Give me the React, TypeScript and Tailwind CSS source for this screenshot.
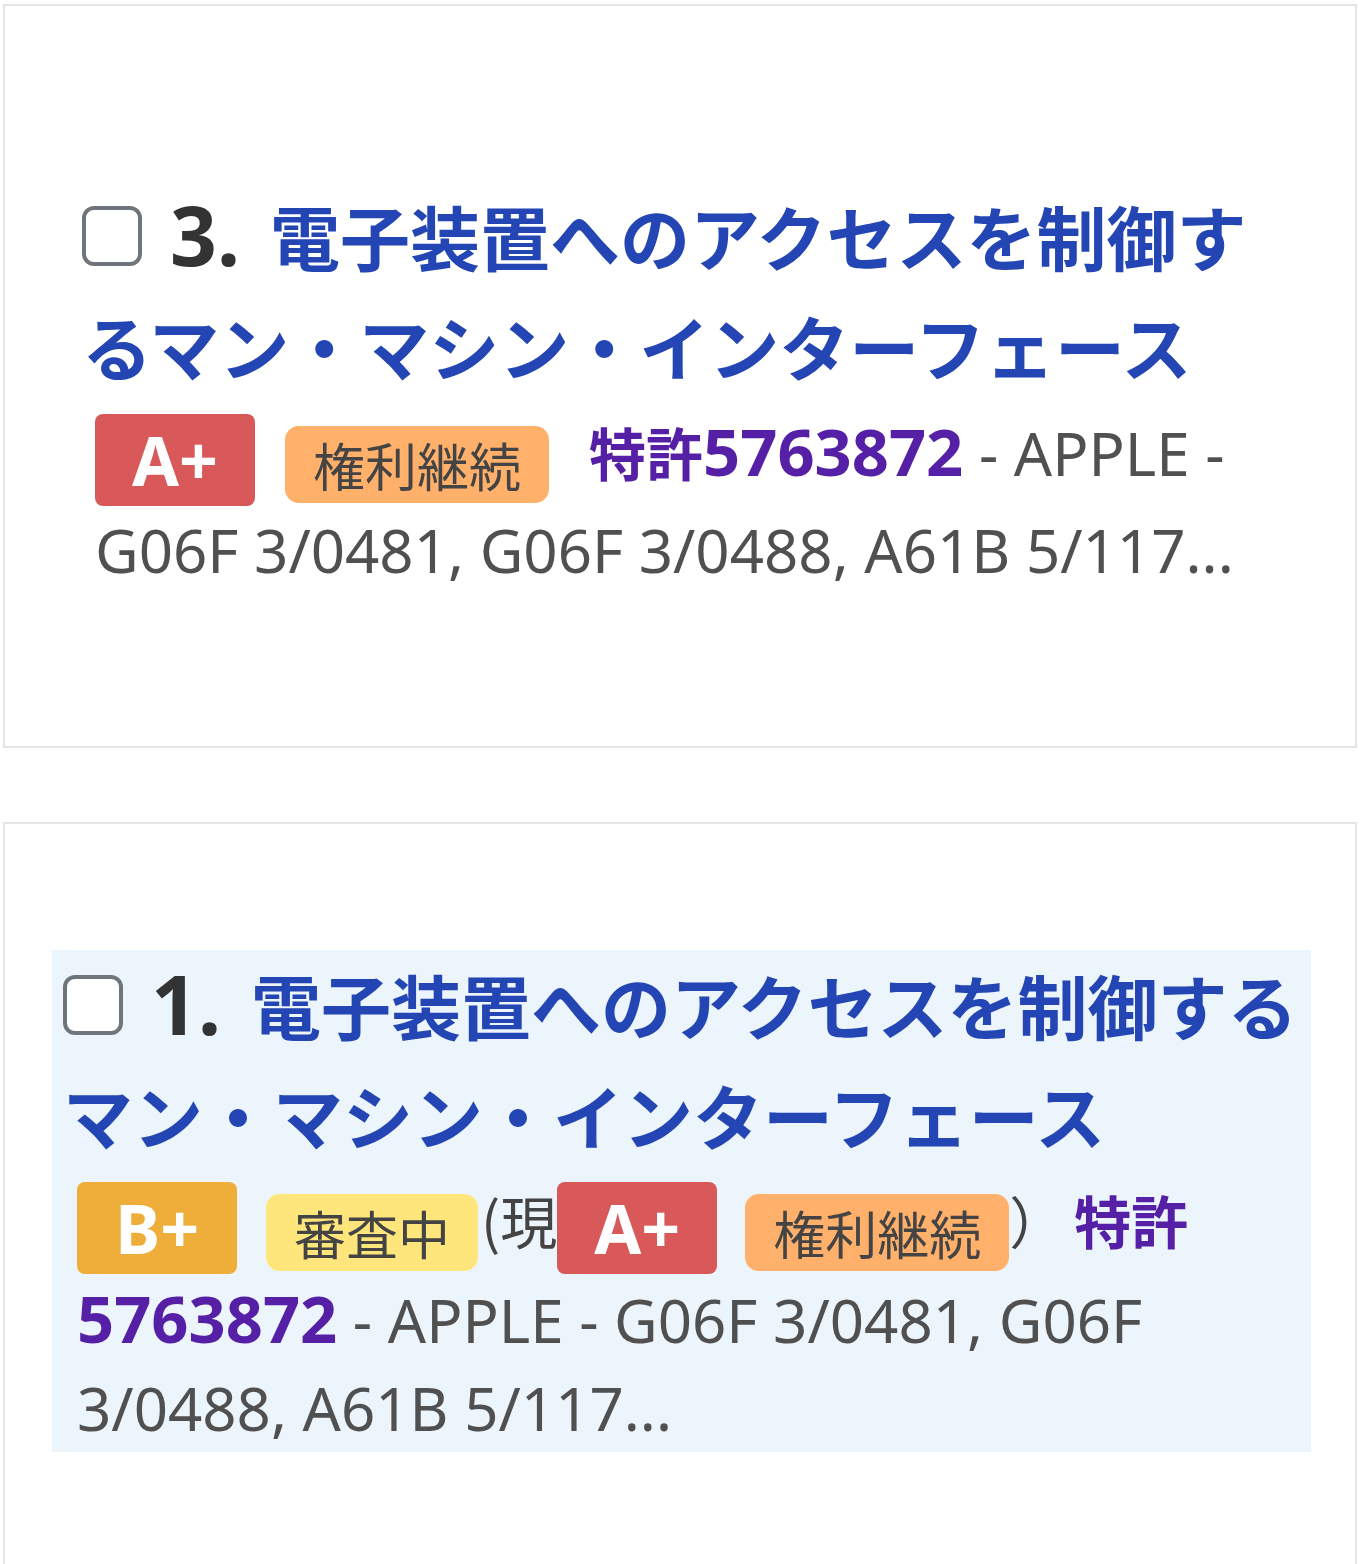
import React from "react";

const TITLE = "電子装置へのアクセスを制御するマン・マシン・インターフェース";

function Checkbox() {
  return (
    <span className="inline-block w-[60px] h-[60px] border-[4px] border-[#6e757c] rounded-[12px] bg-white align-baseline mr-[28px]" />
  );
}

function Title({ num }: { num: string }) {
  return (
    <div className="leading-[110px] text-[70px] font-bold text-[#2446b4] font-['Noto_Sans_CJK_JP',sans-serif]">
      <Checkbox />
      <span className="text-[82px] leading-[90px] text-[#333333] mr-[30px] font-['Noto_Sans',sans-serif]">
        {num}.
      </span>
      {TITLE}
    </div>
  );
}

function Grade({ label, className }: { label: string; className: string }) {
  return (
    <span
      className={`inline-flex items-center justify-center w-[160px] h-[92px] rounded-[8px] align-middle text-white font-bold text-[68px] leading-none font-['Noto_Sans',sans-serif] ${className}`}
    >
      {label}
    </span>
  );
}

function Status({ label, className }: { label: string; className: string }) {
  return (
    <span
      className={`relative top-[5px] inline-flex items-center justify-center h-[77px] px-[28px] rounded-[14px] align-middle text-[#444444] text-[52px] leading-none font-['Noto_Sans_CJK_JP',sans-serif] ${className}`}
    >
      {label}
    </span>
  );
}

function PatentNo() {
  return (
    <span className="font-bold text-[#551fa6]">
      <span className="text-[57px] font-['Noto_Sans_CJK_JP',sans-serif]">特許</span>
      <span className="text-[65px]">5763872</span>
    </span>
  );
}

export default function App() {
  return (
    <div className="bg-white w-[1360px] min-h-[1564px] px-[3px] pt-[4px]">
      {/* Card 1 */}
      <div className="border-2 border-[#e6e6e6] px-[77px] pt-[175px] pb-[152px]">
        <Title num="3" />
        <div className="mt-[6px] pl-[13px] text-[60px] leading-[88px] text-[#505050] font-['Noto_Sans','Noto_Sans_CJK_JP',sans-serif]">
          <Grade label="A+" className="bg-[#d9595b] mr-[30px]" />
          <Status label="権利継続" className="bg-[#ffb06a] mr-[40px]" />
          <PatentNo />
          {" - APPLE - G06F 3/0481, G06F 3/0488, A61B 5/117..."}
        </div>
      </div>

      {/* Card 2 */}
      <div className="mt-[74px] border-2 border-[#e6e6e6] pl-[47px] pr-[44px] pt-[126px] pb-[114px]">
        <div className="bg-[#ecf4fc] pl-[11px]">
          <Title num="1" />
          <div className="mt-[5px] pl-[14px] text-[60px] leading-[88px] text-[#505050] font-['Noto_Sans','Noto_Sans_CJK_JP',sans-serif]">
            <Grade label="B+" className="bg-[#efad3a] mr-[29px]" />
            <Status label="審査中" className="bg-[#ffe67c]" />
            <span className="ml-[3px] text-[57px] text-[#444444] font-['Noto_Sans_CJK_JP',sans-serif]">(現</span>
            <Grade label="A+" className="bg-[#d9595b] mr-[28px]" />
            <Status label="権利継続" className="bg-[#ffb06a]" />
            <span className="text-[56px] text-[#444444] mr-[9px] font-['Noto_Sans_CJK_JP',sans-serif]">）</span>
            <PatentNo />
            {" - APPLE - G06F 3/0481, G06F 3/0488, A61B 5/117..."}
          </div>
        </div>
      </div>
    </div>
  );
}
